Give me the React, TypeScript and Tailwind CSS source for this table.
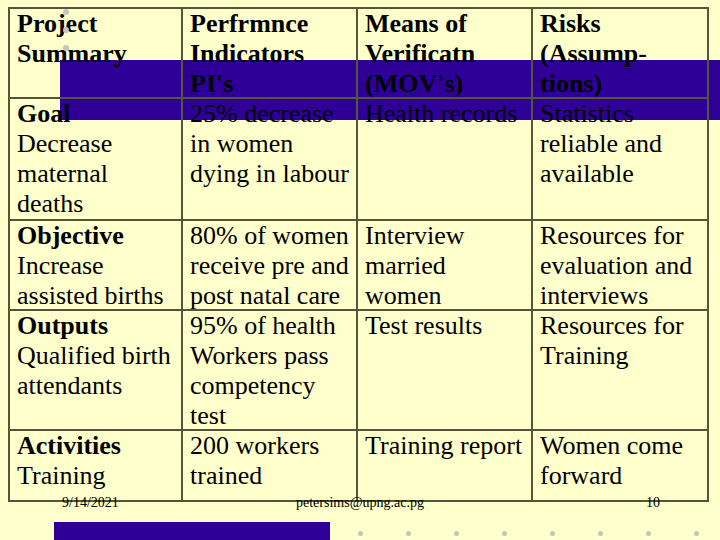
import React from 'react';

type Cell = { head?: string; lines: string[] };

const headers: string[][] = [
  ['Project', 'Summary'],
  ['Perfrmnce', 'Indicators', "PI's"],
  ['Means of', 'Verificatn', "(MOV's)"],
  ['Risks', '(Assump-', 'tions)'],
];

const rows: { height: string; cells: Cell[] }[] = [
  {
    height: 'h-[122px]',
    cells: [
      { head: 'Goal', lines: ['Decrease', 'maternal', 'deaths'] },
      { lines: ['25% decrease', 'in women', 'dying in labour'] },
      { lines: ['Health records'] },
      { lines: ['Statistics', 'reliable and', 'available'] },
    ],
  },
  {
    height: 'h-[90px]',
    cells: [
      { head: 'Objective', lines: ['Increase', 'assisted births'] },
      { lines: ['80% of women', 'receive pre and', 'post natal care'] },
      { lines: ['Interview', 'married', 'women'] },
      { lines: ['Resources for', 'evaluation and', 'interviews'] },
    ],
  },
  {
    height: 'h-[120px]',
    cells: [
      { head: 'Outputs', lines: ['Qualified birth', 'attendants'] },
      { lines: ['95% of health', 'Workers pass', 'competency', 'test'] },
      { lines: ['Test results'] },
      { lines: ['Resources for', 'Training'] },
    ],
  },
  {
    height: 'h-[71px]',
    cells: [
      { head: 'Activities', lines: ['Training'] },
      { lines: ['200 workers', 'trained'] },
      { lines: ['Training report'] },
      { lines: ['Women come', 'forward'] },
    ],
  },
];

const cellBase = 'border-r-2 border-b-2 border-[#55553a] pl-[7px] pt-0 whitespace-nowrap';

export default function App() {
  const bottomDots = [360, 408, 456, 504, 552, 600, 648, 696];
  return (
    <div
      className="relative w-[720px] h-[540px] overflow-hidden bg-[#ffffcc] text-black"
      style={{ fontFamily: '"Liberation Serif", "Times New Roman", serif' }}
    >
      {/* slide decorations */}
      <div className="absolute left-[60px] top-[60px] w-[660px] h-[60px] bg-[#2e0098]" />
      <div className="absolute left-[54px] top-[522px] w-[276px] h-[18px] bg-[#2e0098]" />
      {[12, 30, 48].map(y => (
        <div key={y} className="absolute z-20 w-[6px] h-[6px] rounded-full bg-[#c4c4c4]" style={{ left: 63, top: y - 3 }} />
      ))}
      {bottomDots.map(x => (
        <div key={x} className="absolute w-[5px] h-[5px] rounded-full bg-[#c4c4c4]" style={{ left: x - 2, top: 531 }} />
      ))}

      <div className="relative z-10 pt-[7px] pl-[8px]">
        <div className="grid grid-cols-[173px_175px_175px_176px] w-[701px] border-t-2 border-l-2 border-[#55553a] text-[26px] leading-[30px]">
          {headers.map((h, i) => (
            <div key={i} className={`${cellBase} h-[90px] font-bold`}>
              {h.map(l => (
                <div key={l}>{l}</div>
              ))}
            </div>
          ))}
          {rows.map((r, ri) =>
            r.cells.map((c, ci) => (
              <div key={`${ri}-${ci}`} className={`${cellBase} ${r.height}`}>
                {c.head && <div className="font-bold">{c.head}</div>}
                {c.lines.map(l => (
                  <div key={l}>{l}</div>
                ))}
              </div>
            ))
          )}
        </div>

        <div className="-mt-[7px] -ml-[8px] flex h-4 text-[14px] leading-4">
          <span className="ml-[62px] w-[234px]">9/14/2021</span>
          <span className="w-[128px]">petersims@upng.ac.pg</span>
          <span className="ml-[222px]">10</span>
        </div>
      </div>
    </div>
  );
}
